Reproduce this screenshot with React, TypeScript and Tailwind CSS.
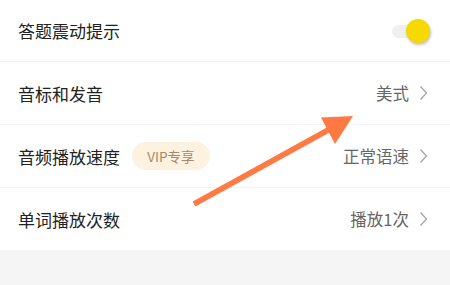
import React from "react";

const Chevron = () => (
  <svg width="9" height="16" viewBox="0 0 9 16" className="ml-[10px]">
    <path d="M1.5 1.5 L7.5 8 L1.5 14.5" fill="none" stroke="#a8a8a8" strokeWidth="1.4" />
  </svg>
);

function Row({
  label,
  extra,
  right,
  className = "h-[62px]",
}: {
  label: string;
  extra?: React.ReactNode;
  right?: React.ReactNode;
  className?: string;
}) {
  return (
    <div className={`flex items-center justify-between bg-white pl-[18px] pr-[22px] ${className}`}>
      <div className="flex items-center">
        <span className="text-[17px] leading-none text-[#222]">{label}</span>
        {extra}
      </div>
      {right}
    </div>
  );
}

function Value({ text }: { text: string }) {
  return (
    <div className="flex items-center">
      <span className="text-[16.5px] leading-none text-[#666]">{text}</span>
      <Chevron />
    </div>
  );
}

export default function App() {
  return (
    <div
      className="relative h-[285px] w-[450px] overflow-hidden bg-[#f5f5f5]"
      style={{ fontFamily: '"Noto Sans CJK SC", "Noto Sans", sans-serif' }}
    >
      <Row
        label="答题震动提示"
        className="h-[61px]"
        right={
          <div className="relative mr-[-2px] h-[24px] w-[38px]">
            <div className="absolute left-0 top-[6px] h-[13px] w-[30px] rounded-full bg-[#efefef]" />
            <div className="absolute right-0 top-0 h-[24px] w-[24px] rounded-full bg-[#f7d900] shadow-[1px_2px_3px_rgba(0,0,0,0.25)]" />
          </div>
        }
      />
      <div className="h-px bg-[#f2f2f2]" />
      <Row label="音标和发音" right={<Value text="美式" />} />
      <div className="h-px bg-[#f2f2f2]" />
      <Row
        label="音频播放速度"
        extra={
          <span className="ml-[12px] flex h-[28px] w-[78px] items-center justify-center rounded-full bg-[#fdf1df] text-[13.5px] text-[#a8876a]">
            VIP专享
          </span>
        }
        right={<Value text="正常语速" />}
      />
      <div className="h-px bg-[#f2f2f2]" />
      <Row label="单词播放次数" right={<Value text="播放1次" />} />

      <svg className="pointer-events-none absolute left-0 top-0" width="450" height="285" viewBox="0 0 450 285">
        <line x1="194" y1="204" x2="330" y2="129" stroke="#ff7942" strokeWidth="5.5" strokeLinecap="butt" />
        <polygon points="321,117.5 353,116 335,144" fill="#ff7942" />
      </svg>
    </div>
  );
}
